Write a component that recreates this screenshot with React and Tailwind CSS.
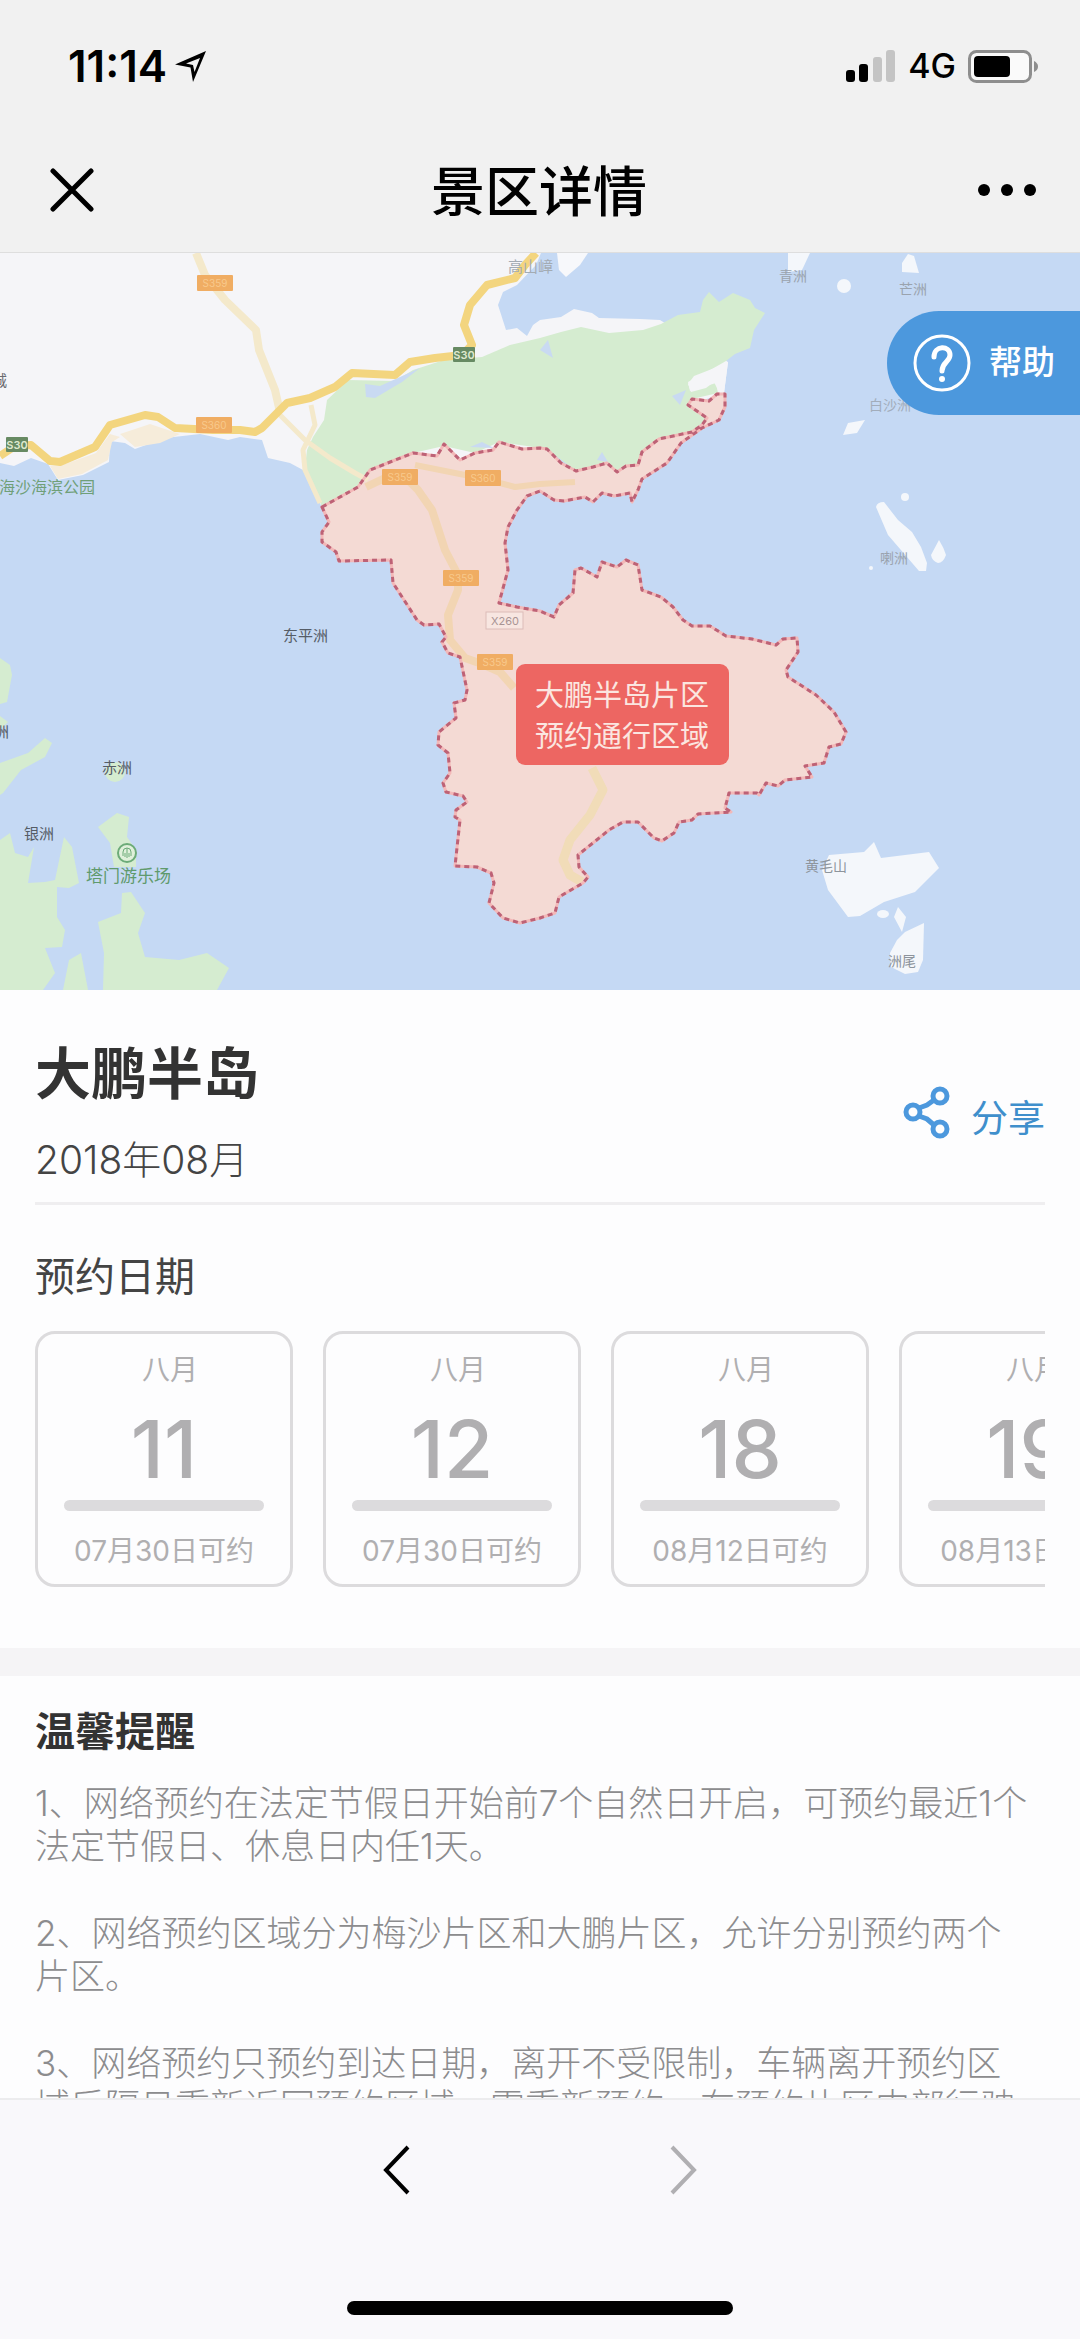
import React from "react";

const FONT = "font-['Inter','Noto_Sans_CJK_SC',sans-serif]";

const SLOTS = [
  { day: "11", opens: "07月30日可约" },
  { day: "12", opens: "07月30日可约" },
  { day: "18", opens: "08月12日可约" },
  { day: "19", opens: "08月13日可约" },
];

const NOTES = [
  "1、网络预约在法定节假日开始前7个自然日开启，可预约最近1个法定节假日、休息日内任1天。",
  "2、网络预约区域分为梅沙片区和大鹏片区，允许分别预约两个片区。",
  "3、网络预约只预约到达日期，离开不受限制，车辆离开预约区域后隔日重新返回预约区域，需重新预约，在预约片区内部行驶不受限制。",
];

const REGION =
  "322,507 358,487 370,470 413,453 437,456 444,444 460,460 475,453 493,450 499,442 522,449 540,448 547,449 561,463 576,471 593,467 607,463 617,472 626,466 638,465 642,452 659,439 692,432 702,425 707,418 688,405 692,399 709,401 717,394 725,394 725,407 719,420 702,428 681,443 667,463 642,479 638,490 632,502 630,493 614,496 602,493 593,502 585,497 564,501 554,500 540,491 527,496 517,510 508,527 505,543 508,570 499,603 517,607 540,611 554,617 559,605 573,593 575,570 581,568 597,577 602,562 617,567 626,560 638,565 642,590 661,597 673,607 683,620 692,626 710,626 726,636 752,639 776,645 783,639 797,638 798,652 786,670 788,677 816,695 834,712 846,732 841,744 829,747 824,763 805,766 812,777 785,780 778,786 766,783 759,795 757,793 729,793 725,808 731,812 698,814 692,820 679,822 674,833 662,841 654,838 638,822 623,822 609,830 578,855 579,867 588,877 583,883 559,897 555,913 540,918 520,923 503,918 489,903 494,883 491,873 477,867 455,866 460,820 455,817 456,810 467,802 463,796 446,792 443,783 450,773 448,753 438,745 439,732 456,718 454,703 465,700 467,690 460,657 448,653 442,642 446,637 439,624 424,625 417,620 393,583 391,560 339,561 336,552 322,542 322,532 329,522";

const MAP_LABELS = [
  { x: 508, y: 272, t: "高山嶂", c: "#a3abb3", s: 15 },
  { x: 779, y: 281, t: "青洲", c: "#9aa3ae", s: 14 },
  { x: 899, y: 294, t: "芒洲", c: "#9aa3ae", s: 14 },
  { x: 869, y: 410, t: "白沙洲", c: "#a2adbb", s: 14 },
  { x: 880, y: 563, t: "喇洲", c: "#9aa3ae", s: 14 },
  { x: 805, y: 871, t: "黄毛山", c: "#8d949c", s: 14 },
  { x: 888, y: 966, t: "洲尾", c: "#8d949c", s: 14 },
  { x: 283, y: 641, t: "东平洲", c: "#555c66", s: 15 },
  { x: 102, y: 773, t: "赤洲", c: "#555c66", s: 15 },
  { x: 24, y: 839, t: "银洲", c: "#555c66", s: 15 },
  { x: -6, y: 737, t: "洲", c: "#555c66", s: 15 },
  { x: -8, y: 386, t: "城", c: "#6b6b70", s: 15 },
  { x: -1, y: 493, t: "海沙海滨公园", c: "#6f9f78", s: 16 },
  { x: 86, y: 882, t: "塔门游乐场", c: "#5f9a6c", s: 17 },
];

const SHIELDS = [
  { x: 197, y: 275, t: "S359" },
  { x: 196, y: 417, t: "S360" },
  { x: 382, y: 469, t: "S359" },
  { x: 465, y: 470, t: "S360" },
  { x: 443, y: 570, t: "S359" },
  { x: 477, y: 654, t: "S359" },
];

function PeninsulaMap() {
  return (
    <svg viewBox="0 253 1080 737" className="block h-auto w-full" role="img" aria-label="大鹏半岛地图">
      <rect x="0" y="253" width="1080" height="737" fill="#c5d9f4" />
      {/* mainland */}
      <path
        d="M0 253H541L536 265 517 285 503 292 498 305 506 330 517 328 527 336 533 325 540 320 561 317 574 309 592 313 599 318 640 319 660 320 728 362 724 393 500 470 322 507 312 490 303 470 290 463 268 458 262 440 240 437 228 440 200 434 165 438 135 449 125 443 110 441 109 462 83 475 58 480 48 464 31 458 14 466 0 463Z"
        fill="#f5f5f8"
      />
      <path d="M557 253H588L580 265 566 277 559 270Z" fill="#f7f8fb" />
      {/* coastal strip */}
      <path d="M50 466 60 466 96 453 110 434 120 437 112 442 108 460 82 474 58 479ZM120 434 150 424 180 434 160 443 135 447Z" fill="#f6ecda" />
      {/* green hills */}
      <path
        d="M482 357 510 345 540 338 561 332 581 327 609 333 643 330 661 324 678 315 700 312 703 300 709 292 719 302 733 293 750 300 755 308 765 313 754 330 750 348 735 354 726 361 712 369 688 382 690 391 716 383 718 393 692 399 688 405 707 418 692 432 659 439 642 452 638 465 617 472 576 471 547 449 499 442 475 453 444 446 413 453 370 470 358 487 322 507 305 467 307 450 313 437 324 420 327 400 348 380 395 381 413 370 444 360Z"
        fill="#d5ecd0"
      />
      <path d="M728 362 712 369 694 376 688 384 691 392 706 388 714 382 719 392 724 393Z" fill="#f5f5f8" />
      <path d="M365 384 380 386 420 368 402 382 375 398 366 397Z" fill="#c9daf2" />
      <path d="M540 350 548 340 553 358ZM672 396 686 390 680 405ZM470 447 482 442 494 448ZM597 460 602 452 608 462Z" fill="#c9daf2" />
      {/* western islands */}
      <g fill="#d5ecd0">
        <path d="M0 840 10 833 15 853 28 857 34 847 28 883 45 882 55 880 64 837 72 847 79 883 69 888 57 887 57 917 65 930 62 947 45 948 55 973 43 990H0Z" />
        <path d="M63 990 69 960 81 953 88 990Z" />
        <path d="M103 990 104 953 98 922 121 913 122 893 131 892 145 913 138 933 145 957 179 960 207 953 229 968 217 990Z" />
        <path d="M98 827 117 813 129 817 127 837 136 850 136 867 114 867 110 843Z" />
        <path d="M0 658 10 665 12 675 7 702 0 704ZM0 716 8 722 0 730ZM0 763 28 753 45 738 52 743 45 757 21 770 3 793 0 795Z" />
        <circle cx="115" cy="772" r="10" />
      </g>
      {/* eastern islands */}
      <g fill="#f4f7fb">
        <path d="M788 253H810L802 270 788 272Z" />
        <circle cx="844" cy="286" r="7" />
        <path d="M902 263 908 254 914 256 919 273 902 272Z" />
        <path d="M848 423 865 420 857 433 843 435Z" />
        <path d="M876 507Q877 502 884 502L898 520 912 532 921 547 927 563 926 571 919 571 888 535Z" />
        <circle cx="905" cy="497" r="4" />
        <circle cx="871" cy="568" r="2" />
        <path d="M939 540Q944 548 946 555Q943 563 938 563Q932 561 931 555Z" />
        <path d="M829 855 864 852 874 842 881 858 929 852 939 868 915 892 884 902 860 916 848 917 828 890 822 870Z" />
        <ellipse cx="883" cy="914" rx="6" ry="4" />
        <path d="M898 907 906 917 902 932 894 917Z" />
        <path d="M924 923 923 960 918 972 905 974 891 967 890 953 897 940 905 932Z" />
      </g>
      {/* reservation region */}
      <polygon points={REGION} fill="#f4dad4" />
      {/* secondary roads */}
      <g fill="none" stroke="#f4e9cb" strokeWidth="8" strokeLinejoin="round">
        <path d="M196 253 205 275 225 300 256 330 259 350 275 390 280 412" />
        <path d="M280 415 305 440 330 458 355 473 368 480" strokeWidth="5" />
        <path d="M311 405 315 425 303 450 305 470 320 503" strokeWidth="5" />
      </g>
      <g fill="none" stroke="#f2d5b3" strokeWidth="8" strokeLinejoin="round">
        <path d="M366 487 385 478 405 477 418 490 432 510 445 550 458 575 458 590 448 615 450 640 465 658 482 664 500 672 514 688" />
        <path d="M415 465 450 472 480 478 515 487 540 484 575 482" strokeWidth="6" />
        <path d="M592 768 603 790 590 815 570 840 563 860 570 875 582 882" strokeWidth="9" stroke="#f1dcb8" />
      </g>
      {/* expressway */}
      <g fill="none" stroke="#f3d57f" strokeWidth="8" strokeLinejoin="round">
        <path d="M0 456 15 446 31 445 50 461 60 462 95 447 110 425 145 415 158 417 175 428 213 430 240 430 255 432 262 428 287 403 310 398 335 387 352 373 395 375 410 362 435 358 462 355 472 345 464 325 470 305 487 285 515 278 525 265 536 253" />
      </g>
      <polygon points={REGION} fill="none" stroke="#f3b8b8" strokeWidth="3" strokeLinejoin="round" />
      <polygon points={REGION} fill="none" stroke="#bd6276" strokeWidth="3" strokeDasharray="5 4" strokeLinejoin="round" />
      {/* road shields */}
      {SHIELDS.map((s, i) => (
        <g key={i}>
          <rect x={s.x} y={s.y} width="36" height="16" rx="1" fill="#f0ad63" />
          <text x={s.x + 18} y={s.y + 12} textAnchor="middle" fontSize="10" fill="#f8c98c">{s.t}</text>
        </g>
      ))}
      {[[453, 347], [6, 437]].map(([x, y]) => (
        <g key={x}>
          <rect x={x} y={y} width="22" height="15" rx="1" fill="#678a63" />
          <text x={x + 11} y={y + 12} textAnchor="middle" fontSize="11" fontWeight="600" fill="#dfe9cf">S30</text>
        </g>
      ))}
      <rect x="486" y="612" width="37" height="17" fill="#f8e6e1" stroke="#dcbcb8" />
      <text x="505" y="625" textAnchor="middle" fontSize="11" fill="#a89494">X260</text>
      {/* place names */}
      {MAP_LABELS.map((l) => (
        <text key={l.t + l.x} x={l.x} y={l.y} fontSize={l.s} fill={l.c}>{l.t}</text>
      ))}
      <circle cx="127" cy="853" r="9" fill="#dff0da" stroke="#6cab78" strokeWidth="2" />
      <path d="M123 856V852A4 4 0 0 1 131 852V856M127 848V858M125 853V857M129 853V857" fill="none" stroke="#6cab78" strokeWidth="1" />
      {/* callout */}
      <rect x="516" y="664" width="213" height="101" rx="9" fill="#ed6662" />
      <g fontSize="29" fill="#fbe6e0" textAnchor="middle">
        <text x="622" y="706">大鹏半岛片区</text>
        <text x="622" y="747">预约通行区域</text>
      </g>
    </svg>
  );
}

function StatusBar() {
  return (
    <div className="flex h-[132px] items-center justify-between pr-10 pl-[68px]">
      <div className="flex items-center gap-2">
        <span className="text-[44px] leading-none font-semibold">11:14</span>
        <svg width="32" height="32" viewBox="0 0 32 32" aria-hidden="true">
          <path fillRule="evenodd" d="M31 1 18 32 15.500 17.500 0 14.500ZM25 8 11 13.500 18 15 19.500 22Z" />
        </svg>
      </div>
      <div className="flex items-center gap-3">
        <svg width="50" height="32" viewBox="0 0 50 32" aria-hidden="true">
          <rect x="0" y="20" width="9" height="12" rx="3" />
          <rect x="13" y="14" width="9" height="18" rx="3" />
          <rect x="27" y="7" width="9" height="25" rx="3" fill="#c4c4c4" />
          <rect x="40" y="0" width="9" height="32" rx="3" fill="#c4c4c4" />
        </svg>
        <span className="text-[34px] leading-[44px] font-medium">4G</span>
        <svg width="72" height="34" viewBox="0 0 72 34" aria-hidden="true">
          <rect x="1.500" y="2.500" width="61" height="30" rx="7" fill="#fafafa" stroke="#8e8e8e" strokeWidth="3" />
          <rect x="6" y="7" width="36" height="21" rx="4" />
          <path d="M66 12Q70 14 70 17.500Q70 21 66 23Z" fill="#8e8e8e" />
        </svg>
      </div>
    </div>
  );
}

function NavBar() {
  return (
    <div className="flex h-[120px] items-start justify-between px-[42px] pt-[26px]">
      <button type="button" aria-label="关闭" className="flex h-16 w-[60px] items-center">
        <svg width="60" height="44" viewBox="0 0 60 44" aria-hidden="true">
          <path d="M11 3 49 41M49 3 11 41" fill="none" stroke="#000" strokeWidth="5" strokeLinecap="round" />
        </svg>
      </button>
      <h1 className="text-[54px] leading-[70px] font-medium">景区详情</h1>
      <button type="button" aria-label="更多" className="flex h-16 w-[62px] items-center">
        <svg width="60" height="12" viewBox="0 0 60 12" aria-hidden="true">
          <circle cx="8" cy="6" r="6" />
          <circle cx="31" cy="6" r="6" />
          <circle cx="54" cy="6" r="6" />
        </svg>
      </button>
    </div>
  );
}

function DateCard({ day, opens }) {
  return (
    <button
      type="button"
      className="flex h-64 w-[258px] shrink-0 flex-col items-center rounded-[20px] border-[3px] border-[#dcdbdd] pt-4 text-[#b0afb1]"
    >
      <span className="pl-3 text-[28px] leading-10">八月</span>
      <span className="mt-4 text-[80px] leading-[86px] font-medium">{day}</span>
      <span className="mt-2 h-[11px] w-[200px] rounded-full bg-[#dcdbdd]" />
      <span className="mt-5 text-[28px] leading-10 whitespace-nowrap">{opens}</span>
    </button>
  );
}

export default function App() {
  return (
    <div className={`flex h-screen flex-col overflow-hidden bg-[#fdfdfe] text-black ${FONT}`}>
      <header className="shrink-0 border-b border-[#dedede] bg-[#f1f1f1]">
        <StatusBar />
        <NavBar />
      </header>

      <main className="min-h-0 flex-1 overflow-y-auto [scrollbar-width:none]">
        <div className="relative">
          <PeninsulaMap />
          <button
            type="button"
            className="absolute top-[58px] right-0 flex h-[104px] w-[193px] items-center gap-[18px] rounded-l-full bg-[#4c98dd] pl-[26px] text-[33px] font-medium text-white"
          >
            <svg width="58" height="58" viewBox="0 0 58 58" aria-hidden="true" fill="none" stroke="#fff" className="shrink-0">
              <circle cx="29" cy="29" r="27" strokeWidth="3" />
              <path d="M21 23C21 11 37 11 37 21C37 28 29 28 29 37" strokeWidth="5" strokeLinecap="round" />
              <circle cx="29" cy="45" r="3" fill="#fff" stroke="none" />
            </svg>
            帮助
          </button>
        </div>

        <section className="px-[35px] pb-[61px]">
          <div className="flex items-center justify-between border-b-[3px] border-[#efeef0] pt-12 pb-3">
            <div>
              <h2 className="text-[56px] leading-[72px] font-bold text-[#333]">大鹏半岛</h2>
              <p className="mt-5 text-[39px] leading-[60px] font-light text-[#444]">2018年08月</p>
            </div>
            <button type="button" className="flex items-end gap-5 text-[37px] leading-[48px] text-[#3f8fcc]">
              <svg width="48" height="58" viewBox="0 0 48 58" aria-hidden="true" fill="none" stroke="#4c98dd" strokeWidth="5">
                <circle cx="10" cy="27" r="7" />
                <circle cx="37" cy="11" r="7" />
                <circle cx="37" cy="44" r="7" />
                <path d="M16 23 24 20 31 15M16 31 24 34 31 40" />
              </svg>
              分享
            </button>
          </div>

          <h3 className="mt-[42px] text-[40px] leading-[60px] text-[#444]">预约日期</h3>
          <div className="mt-6 flex gap-[30px] overflow-x-auto [scrollbar-width:none]">
            {SLOTS.map((slot) => (
              <DateCard key={slot.day} {...slot} />
            ))}
          </div>
        </section>

        <div className="h-7 bg-[#f5f4f6]" />

        <section className="pt-[26px] pr-11 pl-[35px]">
          <h3 className="text-[40px] leading-[60px] font-bold text-[#333]">温馨提醒</h3>
          <div className="mt-5 flex flex-col gap-11 text-[35px] leading-[43px] font-light text-[#8c8c8e]">
            {NOTES.map((note) => (
              <p key={note}>{note}</p>
            ))}
          </div>
        </section>
      </main>

      <footer className="shrink-0 border-t-2 border-[#ececee] bg-[#f9f8fb]">
        <div className="flex h-[140px] items-center justify-center gap-[238px]">
          <button type="button" aria-label="后退" className="flex h-16 w-12 items-center justify-center">
            <svg width="28" height="50" viewBox="0 0 28 50" aria-hidden="true">
              <path d="M25 2 3 25 25 48" fill="none" stroke="#000" strokeWidth="4" />
            </svg>
          </button>
          <button type="button" aria-label="前进" disabled className="flex h-16 w-12 items-center justify-center">
            <svg width="28" height="50" viewBox="0 0 28 50" aria-hidden="true">
              <path d="M3 2 25 25 3 48" fill="none" stroke="#b0afb2" strokeWidth="4" />
            </svg>
          </button>
        </div>
        <div className="flex h-[99px] items-end justify-center pb-6">
          <div className="h-[14px] w-[386px] rounded-full bg-black" />
        </div>
      </footer>
    </div>
  );
}
